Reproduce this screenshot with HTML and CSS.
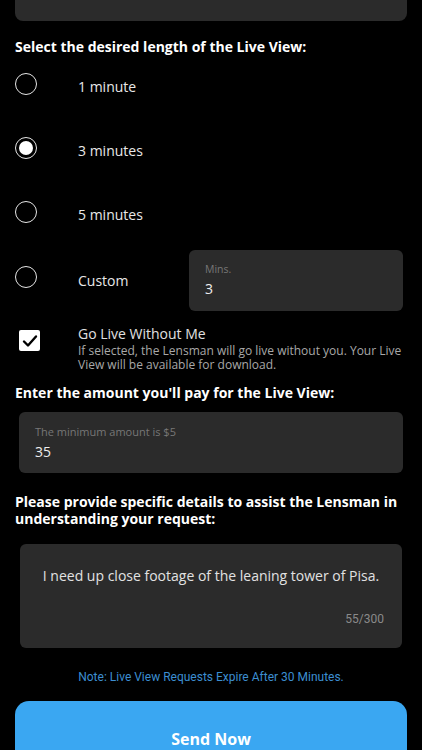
FILE: index.html
```html
<!DOCTYPE html>
<html lang="en">
<head>
    <meta charset="UTF-8">
    <meta name="viewport" content="width=device-width, initial-scale=1.0">
    <title>Live View Request</title>
    <link rel="stylesheet" href="styles.css">
</head>
<body>
    <div class="page">
        <div class="top-card"></div>

        <h2 class="section-title first">Select the desired length of the Live View:</h2>

        <div class="options">
            <label class="option">
                <span class="radio"></span>
                <span class="option-text">1 minute</span>
            </label>
            <label class="option">
                <span class="radio checked"></span>
                <span class="option-text">3 minutes</span>
            </label>
            <label class="option">
                <span class="radio"></span>
                <span class="option-text">5 minutes</span>
            </label>
            <div class="option custom">
                <span class="radio"></span>
                <span class="option-text">Custom</span>
                <div class="field mins">
                    <span class="field-label">Mins.</span>
                    <span class="field-value">3</span>
                </div>
            </div>
        </div>

        <div class="go-live">
            <span class="checkbox">
                <svg width="16" height="14" viewBox="0 0 16 14">
                    <path d="M2 7.5 L6 11.5 L14 2.5" fill="none" stroke="#000" stroke-width="2.4" stroke-linecap="round" stroke-linejoin="round"/>
                </svg>
            </span>
            <div class="go-live-text">
                <div class="go-live-title">Go Live Without Me</div>
                <div class="go-live-desc">If selected, the Lensman will go live without you. Your Live View will be available for download.</div>
            </div>
        </div>

        <h2 class="section-title amount-title">Enter the amount you'll pay for the Live View:</h2>
        <div class="field amount">
            <span class="field-label">The minimum amount is $5</span>
            <span class="field-value">35</span>
        </div>

        <h2 class="section-title details-title">Please provide specific details to assist the Lensman in understanding your request:</h2>
        <div class="details">
            <p class="details-text">I need up close footage of the leaning tower of Pisa.</p>
            <span class="counter">55/300</span>
        </div>

        <p class="note">Note: Live View Requests Expire After 30 Minutes.</p>

        <button class="send">Send Now</button>
    </div>
</body>
</html>
```

FILE: styles.css
```css
body {
    margin: 0;
    background-color: #000;
    color: #fff;
    font-family: "Open Sans", "Liberation Sans", sans-serif;
}
.page {
    padding: 0 15px;
    overflow: hidden;
    height: 750px;
}
.top-card {
    height: 21px;
    background-color: #2b2b2b;
    border-radius: 0 0 8px 8px;
}
.section-title {
    font-size: 14px;
    font-weight: 700;
    margin: 0;
    line-height: 17px;
}
.section-title.first {
    margin-top: 17px;
}
.options {
    display: flex;
    flex-direction: column;
    gap: 20px;
    margin-top: 7px;
}
.option {
    display: flex;
    align-items: center;
    height: 44px;
}
.option.custom {
    height: 62px;
    margin-top: -5px;
}
.option.custom .radio {
    margin-top: -6px;
}
.option.custom .option-text {
    padding-top: 0;
}
.radio {
    width: 20px;
    height: 20px;
    border: 1.5px solid #e6e6e6;
    border-radius: 50%;
    flex-shrink: 0;
    position: relative;
}
.radio.checked::after {
    content: "";
    position: absolute;
    left: 3px;
    top: 3px;
    width: 14px;
    height: 14px;
    border-radius: 50%;
    background-color: #fff;
}
.option-text {
    margin-left: 41px;
    font-size: 14px;
    color: #e8e8e8;
    padding-top: 4px;
}
.field {
    background-color: #2b2b2b;
    border-radius: 6px;
    display: flex;
    flex-direction: column;
    justify-content: center;
    box-sizing: border-box;
}
.field-label {
    font-size: 10.5px;
    color: #777;
}
.field-value {
    font-size: 14px;
    color: #eee;
    margin-top: 3px;
}
.mins {
    margin-left: auto;
    margin-right: 4px;
    width: 214px;
    height: 61px;
    padding-left: 16px;
}
.go-live {
    display: flex;
    margin-top: 14px;
}
.checkbox {
    width: 21px;
    height: 21px;
    background-color: #fff;
    border-radius: 2px;
    margin-left: 4px;
    margin-top: 5px;
    display: flex;
    align-items: center;
    justify-content: center;
    flex-shrink: 0;
}
.go-live-text {
    margin-left: 38px;
}
.go-live-title {
    font-size: 14px;
    color: #e0e0e0;
    line-height: 17px;
}
.go-live-desc {
    font-size: 12px;
    color: #a8a8a8;
    line-height: 14px;
    margin-top: 2px;
}
.amount-title {
    margin-top: 12px;
}
.amount {
    margin: 11px 4px 0 4px;
    height: 61px;
    padding-left: 16px;
}
.amount .field-label {
    font-size: 11px;
}
.details-title {
    margin-top: 20px;
}
.details {
    margin: 17px 5px 0 5px;
    height: 104px;
    background-color: #2b2b2b;
    border-radius: 6px;
    display: flex;
    flex-direction: column;
    align-items: center;
    padding: 22px 18px 0 18px;
    box-sizing: border-box;
}
.details-text {
    margin: 0;
    font-size: 14px;
    color: #e2e2e2;
}
.counter {
    align-self: flex-end;
    margin-top: 27px;
    font-size: 12px;
    color: #8a8a8a;
    font-family: Roboto, "Liberation Sans", sans-serif;
}
.note {
    margin: 22px 0 0 0;
    text-align: center;
    font-size: 12px;
    color: #3c8ed0;
    font-family: Roboto, "Liberation Sans", sans-serif;
}
.send {
    display: block;
    width: 100%;
    height: 72px;
    margin-top: 17px;
    padding-top: 4px;
    border: none;
    border-radius: 14px;
    background-color: #3aa7f2;
    color: #fff;
    font-family: "Open Sans", "Liberation Sans", sans-serif;
    font-size: 16px;
    font-weight: 700;
}
```
